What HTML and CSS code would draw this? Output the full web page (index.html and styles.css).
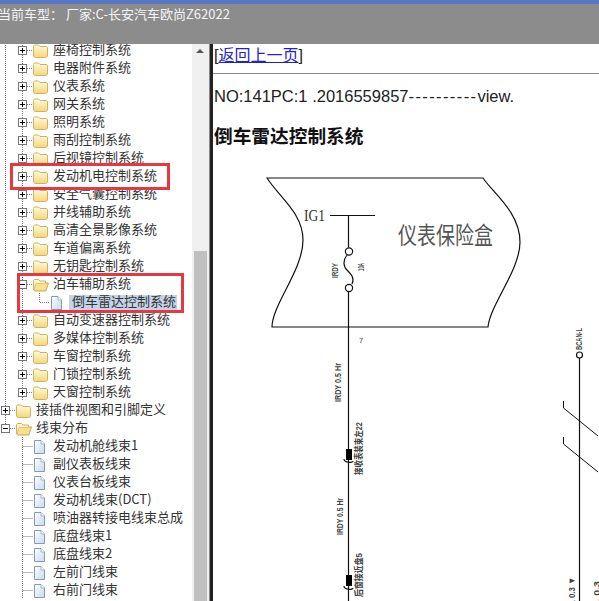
FILE: index.html
```html
<!DOCTYPE html>
<html lang="zh-CN">
<head>
    <meta charset="UTF-8">
    <title>倒车雷达控制系统</title>
    <link rel="stylesheet" href="styles.css">
</head>
<body>
    <!-- tree pieces, each cell is 17x18 -->
    <svg class="defs" width="0" height="0">
        <symbol id="line" viewBox="0 0 17 18"><path class="dots" d="M5.5 0V18"/></symbol>
        <symbol id="tee" viewBox="0 0 17 18"><path class="dots" d="M5.5 0V18M5.5 9.5H16"/></symbol>
        <symbol id="corner" viewBox="0 0 17 18"><path class="dots" d="M5.5 0V9.5H16"/></symbol>
        <symbol id="plus" viewBox="0 0 17 18">
            <path class="dots" d="M5.5 0V18M10 9.5H17"/>
            <rect class="box" x="1.5" y="5.5" width="8" height="8"/>
            <path class="mark" d="M3 9.5H8M5.5 7V12"/>
        </symbol>
        <symbol id="minus" viewBox="0 0 17 18">
            <path class="dots" d="M5.5 0V18M10 9.5H17"/>
            <rect class="box" x="1.5" y="5.5" width="8" height="8"/>
            <path class="mark" d="M3 9.5H8"/>
        </symbol>
        <symbol id="minus-end" viewBox="0 0 17 18">
            <path class="dots" d="M5.5 0V5M10 9.5H17"/>
            <rect class="box" x="1.5" y="5.5" width="8" height="8"/>
            <path class="mark" d="M3 9.5H8"/>
        </symbol>
        <linearGradient id="folderFill" x1="0" y1="0" x2="0" y2="1">
            <stop offset="0" stop-color="#fffbe0"/>
            <stop offset="1" stop-color="#f6d677"/>
        </linearGradient>
        <linearGradient id="fileFill" x1="0" y1="0" x2="1" y2="1">
            <stop offset="0" stop-color="#ffffff"/>
            <stop offset="1" stop-color="#c9d9ef"/>
        </linearGradient>
        <symbol id="folder" viewBox="0 0 16 18">
            <path d="M0.5 5.5C0.5 4.5 1 4 2 4H5.5L7 5.5H13C14.2 5.5 14.5 6 14.5 7V14C14.5 15.5 14 16.5 12.5 16.5H2.5C1 16.5 0.5 15.5 0.5 14Z" fill="url(#folderFill)" stroke="#cdb262"/>
        </symbol>
        <symbol id="folder-open" viewBox="0 0 16 18">
            <path d="M0.5 6C0.5 5 1 4.5 2 4.5H5.5L7 6H12.5V8H15.5L13 16H2.5C1 16 0.5 15 0.5 14Z" fill="url(#folderFill)" stroke="#cdb262"/>
            <path d="M3 8.5H15L12.8 15.5H1Z" fill="#f9e08e" stroke="#cdb262" stroke-width=".6"/>
        </symbol>
        <symbol id="file" viewBox="0 0 13 18">
            <path d="M1.5 3.5H8L11.5 7V16.5H1.5Z" fill="url(#fileFill)" stroke="#7f9db9"/>
            <path d="M8 3.5V7H11.5" fill="#fff" stroke="#7f9db9" stroke-width=".7"/>
        </symbol>
    </svg>

    <div class="topbar">
        <div class="car-info">当前车型： 厂家:C-长安汽车欧尚Z62022</div>
    </div>

    <div class="panels">
        <div class="side">
            <div class="tree">
                <div class="row"><svg class="cell"><use href="#line"/></svg><svg class="cell"><use href="#plus"/></svg><svg class="ico"><use href="#folder"/></svg><span>座椅控制系统</span></div>
                <div class="row"><svg class="cell"><use href="#line"/></svg><svg class="cell"><use href="#plus"/></svg><svg class="ico"><use href="#folder"/></svg><span>电器附件系统</span></div>
                <div class="row"><svg class="cell"><use href="#line"/></svg><svg class="cell"><use href="#plus"/></svg><svg class="ico"><use href="#folder"/></svg><span>仪表系统</span></div>
                <div class="row"><svg class="cell"><use href="#line"/></svg><svg class="cell"><use href="#plus"/></svg><svg class="ico"><use href="#folder"/></svg><span>网关系统</span></div>
                <div class="row"><svg class="cell"><use href="#line"/></svg><svg class="cell"><use href="#plus"/></svg><svg class="ico"><use href="#folder"/></svg><span>照明系统</span></div>
                <div class="row"><svg class="cell"><use href="#line"/></svg><svg class="cell"><use href="#plus"/></svg><svg class="ico"><use href="#folder"/></svg><span>雨刮控制系统</span></div>
                <div class="row"><svg class="cell"><use href="#line"/></svg><svg class="cell"><use href="#plus"/></svg><svg class="ico"><use href="#folder"/></svg><span>后视镜控制系统</span></div>
                <div class="row"><svg class="cell"><use href="#line"/></svg><svg class="cell"><use href="#plus"/></svg><svg class="ico"><use href="#folder"/></svg><span>发动机电控制系统</span></div>
                <div class="row"><svg class="cell"><use href="#line"/></svg><svg class="cell"><use href="#plus"/></svg><svg class="ico"><use href="#folder"/></svg><span>安全气囊控制系统</span></div>
                <div class="row"><svg class="cell"><use href="#line"/></svg><svg class="cell"><use href="#plus"/></svg><svg class="ico"><use href="#folder"/></svg><span>并线辅助系统</span></div>
                <div class="row"><svg class="cell"><use href="#line"/></svg><svg class="cell"><use href="#plus"/></svg><svg class="ico"><use href="#folder"/></svg><span>高清全景影像系统</span></div>
                <div class="row"><svg class="cell"><use href="#line"/></svg><svg class="cell"><use href="#plus"/></svg><svg class="ico"><use href="#folder"/></svg><span>车道偏离系统</span></div>
                <div class="row"><svg class="cell"><use href="#line"/></svg><svg class="cell"><use href="#plus"/></svg><svg class="ico"><use href="#folder"/></svg><span>无钥匙控制系统</span></div>
                <div class="row"><svg class="cell"><use href="#line"/></svg><svg class="cell"><use href="#minus"/></svg><svg class="ico"><use href="#folder-open"/></svg><span>泊车辅助系统</span></div>
                <div class="row"><svg class="cell"><use href="#line"/></svg><svg class="cell"><use href="#line"/></svg><svg class="cell"><use href="#corner"/></svg><svg class="ico ico-file"><use href="#file"/></svg><span class="selected">倒车雷达控制系统</span></div>
                <div class="row"><svg class="cell"><use href="#line"/></svg><svg class="cell"><use href="#plus"/></svg><svg class="ico"><use href="#folder"/></svg><span>自动变速器控制系统</span></div>
                <div class="row"><svg class="cell"><use href="#line"/></svg><svg class="cell"><use href="#plus"/></svg><svg class="ico"><use href="#folder"/></svg><span>多媒体控制系统</span></div>
                <div class="row"><svg class="cell"><use href="#line"/></svg><svg class="cell"><use href="#plus"/></svg><svg class="ico"><use href="#folder"/></svg><span>车窗控制系统</span></div>
                <div class="row"><svg class="cell"><use href="#line"/></svg><svg class="cell"><use href="#plus"/></svg><svg class="ico"><use href="#folder"/></svg><span>门锁控制系统</span></div>
                <div class="row"><svg class="cell"><use href="#line"/></svg><svg class="cell"><use href="#plus"/></svg><svg class="ico"><use href="#folder"/></svg><span>天窗控制系统</span></div>
                <div class="row"><svg class="cell"><use href="#plus"/></svg><svg class="ico"><use href="#folder"/></svg><span>接插件视图和引脚定义</span></div>
                <div class="row"><svg class="cell"><use href="#minus-end"/></svg><svg class="ico"><use href="#folder-open"/></svg><span>线束分布</span></div>
                <div class="row"><div class="cell"></div><svg class="cell"><use href="#tee"/></svg><svg class="ico ico-file"><use href="#file"/></svg><span>发动机舱线束1</span></div>
                <div class="row"><div class="cell"></div><svg class="cell"><use href="#tee"/></svg><svg class="ico ico-file"><use href="#file"/></svg><span>副仪表板线束</span></div>
                <div class="row"><div class="cell"></div><svg class="cell"><use href="#tee"/></svg><svg class="ico ico-file"><use href="#file"/></svg><span>仪表台板线束</span></div>
                <div class="row"><div class="cell"></div><svg class="cell"><use href="#tee"/></svg><svg class="ico ico-file"><use href="#file"/></svg><span>发动机线束(DCT)</span></div>
                <div class="row"><div class="cell"></div><svg class="cell"><use href="#tee"/></svg><svg class="ico ico-file"><use href="#file"/></svg><span>喷油器转接电线束总成</span></div>
                <div class="row"><div class="cell"></div><svg class="cell"><use href="#tee"/></svg><svg class="ico ico-file"><use href="#file"/></svg><span>底盘线束1</span></div>
                <div class="row"><div class="cell"></div><svg class="cell"><use href="#tee"/></svg><svg class="ico ico-file"><use href="#file"/></svg><span>底盘线束2</span></div>
                <div class="row"><div class="cell"></div><svg class="cell"><use href="#tee"/></svg><svg class="ico ico-file"><use href="#file"/></svg><span>左前门线束</span></div>
                <div class="row"><div class="cell"></div><svg class="cell"><use href="#tee"/></svg><svg class="ico ico-file"><use href="#file"/></svg><span>右前门线束</span></div>
            </div>
            <!-- red annotation boxes drawn over the tree -->
            <div class="mark-box mark-engine"></div>
            <div class="mark-box mark-parking"></div>
        </div>

        <div class="scrollbar">
            <div class="scroll-up"></div>
            <div class="scroll-thumb"></div>
        </div>
        <div class="divider"></div>

        <div class="content">
            <a class="back" href="#">[<u>返回上一页</u>]</a>
            <hr>
            <p class="doc-no">NO:141PC:1 .2016559857<span class="dashes">----------</span>view.</p>
            <h3>倒车雷达控制系统</h3>
            <svg class="diagram" viewBox="213 160 386 441" width="386" height="441">
                <g class="wire">
                    <path d="M267 178H483C492 192 520 212 520 242C520 270 490 305 488 327H272C272 305 303 270 303 240C303 213 279 197 267 178Z"/>
                    <path d="M330 215.5H375M348.5 215V247.5M348.5 292V601"/>
                    <circle cx="349" cy="251.5" r="3.6"/>
                    <circle cx="349" cy="288" r="3.6"/>
                    <path d="M347 255C343 260 343 266 347 270C351 274 355 278 352 284"/>
                    <path d="M344 459C344 463 353 463 353 461"/>
                    <path d="M344 586C344 590 353 590 353 588"/>
                    <path d="M579.5 358V601"/>
                    <circle cx="579.5" cy="355" r="3"/>
                    <path class="thin" d="M563.5 401V408L598 436M563.5 437V444L598 472"/>
                </g>
                <rect x="346" y="449" width="6" height="11"/>
                <rect x="346" y="575" width="6" height="11"/>
                <text class="sig" x="304" y="221" textLength="21" lengthAdjust="spacingAndGlyphs">IG1</text>
                <text class="box-name" transform="translate(398 244) scale(1 1.25)">仪表保险盒</text>
                <g class="tiny">
                    <text transform="translate(338 278) rotate(-90)" textLength="15" lengthAdjust="spacingAndGlyphs">IRDY</text>
                    <text transform="translate(364 271) rotate(-90)" textLength="8" lengthAdjust="spacingAndGlyphs">10A</text>
                    <text class="plain" x="359" y="343">7</text>
                    <text transform="translate(341 402) rotate(-90)" textLength="39" lengthAdjust="spacingAndGlyphs">IRDY 0.5 Hr</text>
                    <text transform="translate(362 475) rotate(-90)" textLength="53" lengthAdjust="spacingAndGlyphs">接收表装束左22</text>
                    <text transform="translate(343 535) rotate(-90)" textLength="37" lengthAdjust="spacingAndGlyphs">IRDY 0.5 Hr</text>
                    <text transform="translate(362 597) rotate(-90)" textLength="44" lengthAdjust="spacingAndGlyphs">后窗接近盘5</text>
                    <text transform="translate(582 350) rotate(-90)" textLength="22" lengthAdjust="spacingAndGlyphs">BCAN-L</text>
                    <text transform="translate(575 605) rotate(-90)" textLength="28" lengthAdjust="spacingAndGlyphs">L 0.3 ▼</text>
                    <text transform="translate(600 605) rotate(-90)" textLength="24" lengthAdjust="spacingAndGlyphs">L 0.3</text>
                </g>
            </svg>
        </div>
    </div>
</body>
</html>
```

FILE: styles.css
```css
html, body {
    height: 100%;
    margin: 0;
    padding: 0;
    overflow: hidden;
    background-color: #fff;
    font-family: "Noto Sans CJK SC", "Noto Sans", sans-serif;
}

body {
    display: flex;
    flex-direction: column;
}

.defs {
    position: absolute;
}

.dots {
    fill: none;
    stroke: #777;
    stroke-width: 1;
    stroke-dasharray: 1 1;
}

.box {
    fill: #fff;
    stroke: #777;
}

.mark {
    fill: none;
    stroke: #000;
}

.topbar {
    height: 40px;
    flex: none;
    background-color: #8c8c8c;
    border-top: 4px solid #5577c4;
    overflow: hidden;
}

.car-info {
    color: #f4f4f4;
    font-size: 13px;
    line-height: 18px;
    margin-left: -2px;
    padding-top: 1px;
    white-space: pre;
}

.panels {
    flex: 1;
    display: flex;
    min-height: 0;
}

.side {
    position: relative;
    width: 192px;
    flex: none;
    overflow: hidden;
}

.tree {
    margin-top: -3px;
}

.row {
    display: flex;
    align-items: center;
    height: 18px;
    color: #333;
    font-size: 13px;
    white-space: nowrap;
}

/* the CJK font sits low in its line box */
.row > span {
    margin-bottom: 4px;
}

.cell {
    display: block;
    width: 17px;
    height: 18px;
    flex: none;
}

.ico {
    display: block;
    width: 16px;
    height: 18px;
    margin: 0 4px 0 -1px;
    flex: none;
}

.ico-file {
    width: 13px;
    margin: 0 7px 0 -1px;
}

.row > .selected {
    background-color: #c5d3e8;
    line-height: 11px;
    padding: 0 1px 4px 3px;
    margin: 0 0 0 -1px;
}

.mark-box {
    position: absolute;
    box-sizing: border-box;
    border: 3px solid #e5383f;
}

.mark-engine {
    left: 10px;
    top: 119px;
    width: 160px;
    height: 27px;
}

.mark-parking {
    left: 17px;
    top: 229px;
    width: 167px;
    height: 40px;
}

.scrollbar {
    width: 17px;
    flex: none;
    display: flex;
    flex-direction: column;
    background-color: #f0f0f0;
}

.scroll-up {
    height: 207px;
    flex: none;
    position: relative;
}

.scroll-up::before {
    content: "";
    position: absolute;
    left: 4px;
    top: 5px;
    border-left: 4px solid transparent;
    border-right: 4px solid transparent;
    border-bottom: 4px solid #555;
}

.scroll-thumb {
    flex: 1;
    margin: 0 2px;
    background-color: #c0c0c0;
}

.divider {
    width: 4px;
    flex: none;
    background-color: #222;
    border-left: 1px solid #8a8a8a;
    box-sizing: border-box;
}

.content {
    flex: 1;
    min-width: 0;
    overflow: hidden;
    color: #222;
}

.back {
    display: block;
    margin: 2px 0 0 1px;
    font-size: 16px;
    line-height: 19px;
    color: #222;
    text-decoration: none;
    font-family: "Liberation Sans", "Noto Sans CJK SC", sans-serif;
}

.back u {
    color: #2222cc;
}

hr {
    margin: 8px 0 0;
    border: 0;
    border-top: 1px solid #888;
}

.doc-no {
    margin: 13px 0 0 1px;
    font-size: 16.5px;
    line-height: 18px;
    white-space: nowrap;
    font-family: "Liberation Sans", Arial, sans-serif;
}

.dashes {
    letter-spacing: 1.4px;
}

h3 {
    margin: 18px 0 0 1px;
    font-size: 18.7px;
    line-height: 24px;
    color: #111;
}

.diagram {
    display: block;
    margin-top: 13px;
}

.wire path,
.wire circle {
    fill: none;
    stroke: #111;
    stroke-width: 1.2;
}

.wire .thin {
    stroke-width: 1;
}

.sig {
    font-family: "Liberation Serif", serif;
    font-size: 17px;
    fill: #333;
}

.box-name {
    font-size: 19px;
    fill: #555;
}

.tiny text {
    font-family: "Liberation Sans", "Noto Sans CJK SC", sans-serif;
    font-size: 9.5px;
    font-weight: bold;
    fill: #444;
}

.tiny .plain {
    font-size: 7.5px;
    font-weight: normal;
}
```
